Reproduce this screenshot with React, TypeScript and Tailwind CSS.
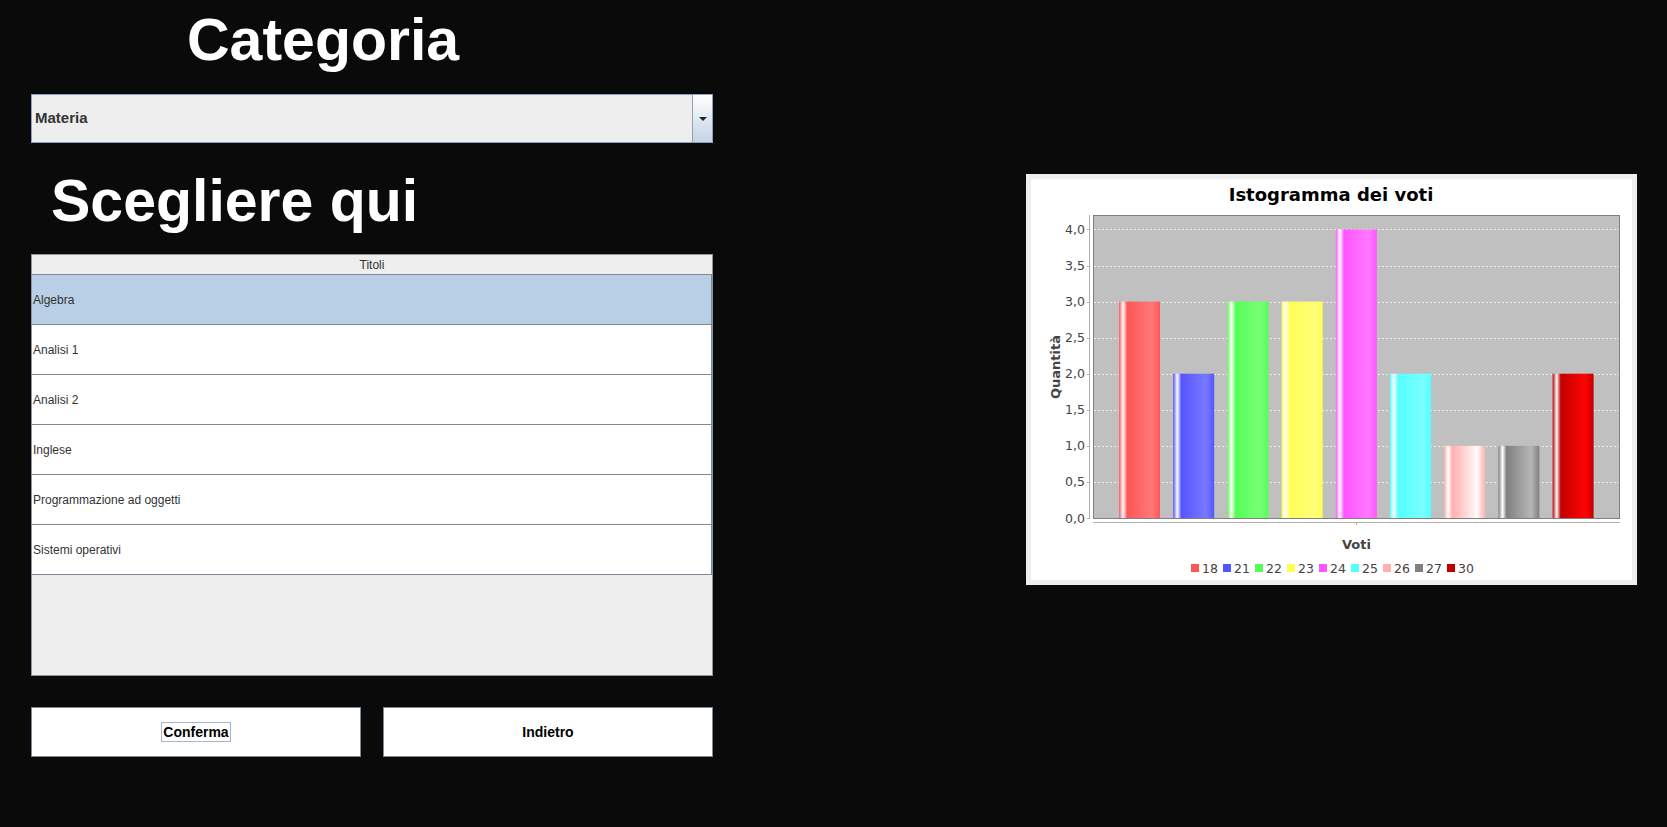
import React from 'react';

const materie = [
  'Algebra',
  'Analisi 1',
  'Analisi 2',
  'Inglese',
  'Programmazione ad oggetti',
  'Sistemi operativi',
];

// voto -> [quantità, colore, colore più chiaro]
const voti: [string, number, string, string][] = [
  ['18', 3, '#ff5555', '#ff7979'],
  ['21', 2, '#5555ff', '#7979ff'],
  ['22', 3, '#55ff55', '#79ff79'],
  ['23', 3, '#ffff55', '#ffff79'],
  ['24', 4, '#ff55ff', '#ff79ff'],
  ['25', 2, '#55ffff', '#79ffff'],
  ['26', 1, '#ffafaf', '#fffafa'],
  ['27', 1, '#808080', '#b6b6b6'],
  ['30', 2, '#c00000', '#ff0303'],
];

function Istogramma() {
  const top = 36;
  const zero = 339;
  const unit = (zero - top) / 4.2;
  const ticks = [0, 0.5, 1, 1.5, 2, 2.5, 3, 3.5, 4];

  return (
    <svg width="601" height="401" className="block">
      <defs>
        {voti.map(([v, , c0, c1]) => (
          <linearGradient key={v} id={'g' + v} x1="0" x2="1" y1="0" y2="0">
            <stop offset="0" stopColor={c0} />
            <stop offset="0.1" stopColor="#ffffff" />
            <stop offset="0.2" stopColor={c0} />
            <stop offset="0.8" stopColor={c1} />
            <stop offset="1" stopColor={c0} />
          </linearGradient>
        ))}
      </defs>
      <text
        x="300"
        y="22"
        textAnchor="middle"
        fontFamily="DejaVu Sans, sans-serif"
        fontWeight="bold"
        fontSize="18"
        fill="#000"
      >
        Istogramma dei voti
      </text>

      <rect x="62.5" y={top + 0.5} width="526" height={zero - top} fill="#c0c0c0" />
      {ticks.slice(1).map((t) => (
        <line
          key={t}
          x1="63"
          x2="588"
          y1={Math.round(zero - t * unit) + 0.5}
          y2={Math.round(zero - t * unit) + 0.5}
          stroke="#ececec"
          strokeWidth="1"
          strokeDasharray="2 2"
        />
      ))}
      {voti.map(([v, q], i) => {
        const h = q * unit;
        return (
          <rect key={v} x={88 + i * 54.2} y={zero - h} width="41" height={h} fill={`url(#g${v})`} />
        );
      })}
      <rect x="62.5" y={top + 0.5} width="526" height={zero - top} fill="none" stroke="#808080" />

      {/* asse y */}
      <line x1="58.5" x2="58.5" y1={top} y2={zero + 1} stroke="#b0b0b0" />
      {ticks.map((t) => (
        <g key={t}>
          <line x1="56" x2="58.5" y1={Math.round(zero - t * unit) + 0.5} y2={Math.round(zero - t * unit) + 0.5} stroke="#b0b0b0" />
          <text
            x="54"
            y={zero - t * unit + 4.5}
            textAnchor="end"
            fontFamily="DejaVu Sans, sans-serif"
            fontSize="12.5"
            fill="#444"
          >
            {t.toFixed(1).replace('.', ',')}
          </text>
        </g>
      ))}
      <text
        transform="translate(28.5 188) rotate(-90)"
        textAnchor="middle"
        fontFamily="DejaVu Sans, sans-serif"
        fontWeight="bold"
        fontSize="13"
        fill="#444"
      >
        Quantità
      </text>

      {/* asse x */}
      <line x1="62" x2="589" y1="343.5" y2="343.5" stroke="#b0b0b0" />
      <line x1="325.5" x2="325.5" y1="343.5" y2="346" stroke="#b0b0b0" />
      <text
        x="325.5"
        y="370"
        textAnchor="middle"
        fontFamily="DejaVu Sans, sans-serif"
        fontWeight="bold"
        fontSize="13"
        fill="#444"
      >
        Voti
      </text>

      {/* legenda */}
      {voti.map(([v, , c0], i) => (
        <g key={v}>
          <rect x={160 + i * 32} y="385" width="8" height="8" fill={c0} />
          <text x={171 + i * 32} y="394" fontFamily="DejaVu Sans, sans-serif" fontSize="12.5" fill="#444">
            {v}
          </text>
        </g>
      ))}
    </svg>
  );
}

export default function App() {
  return (
    <div className="flex h-[827px] w-full bg-[#0a0a0a] font-['Liberation_Sans',Arial,sans-serif]">
      <div className="ml-[31px] flex w-[682px] flex-col">
        <h1 className="ml-[156px] mt-[11px] text-[59px] font-bold leading-[59px] text-white">Categoria</h1>

        <div className="mt-[24px] flex h-[49px] border border-[#8da2ba] bg-[#eeeeee]">
          <div className="flex flex-1 items-center pl-[3px] text-[15px] font-bold text-[#333333]">Materia</div>
          <div className="flex w-[20px] items-center justify-center border-l border-[#8da2ba] bg-linear-to-b from-white to-[#c3d4e6]">
            <div className="h-0 w-0 border-x-[4px] border-t-[4px] border-x-transparent border-t-[#222]" />
          </div>
        </div>

        <h2 className="ml-[20px] mt-[29px] text-[59px] font-bold leading-[59px] text-white">Scegliere qui</h2>

        <div className="mt-[23px] flex h-[422px] flex-col border border-[#8a96a3] bg-[#eeeeee]">
          <div className="flex h-[20px] items-center justify-center border-b border-[#7a8a99] text-[12px] text-[#333333]">
            Titoli
          </div>
          <div className="border-r border-[#7a8a99]">
            {materie.map((m, i) => (
              <div
                key={m}
                className={
                  'flex h-[50px] items-center border-b border-[#7a8a99] pl-px text-[12px] text-[#333333] ' +
                  (i === 0 ? 'bg-[#b8cfe5]' : 'bg-white')
                }
              >
                {m}
              </div>
            ))}
          </div>
        </div>

        <div className="mt-[31px] flex gap-[22px]">
          <button className="flex h-[50px] w-[330px] items-center justify-center border border-[#7a8a99] bg-white text-[14px] font-bold text-black">
            <span className="border border-[#a3b8cc] px-px leading-[18px]">Conferma</span>
          </button>
          <button className="flex h-[50px] w-[330px] items-center justify-center border border-[#7a8a99] bg-white text-[14px] font-bold text-black">
            Indietro
          </button>
        </div>
      </div>

      <div className="ml-[313px] mt-[174px] h-[411px] w-[611px] bg-[#eeeeee] p-[5px]">
        <div className="h-[401px] w-[601px] bg-white">
          <Istogramma />
        </div>
      </div>
    </div>
  );
}
